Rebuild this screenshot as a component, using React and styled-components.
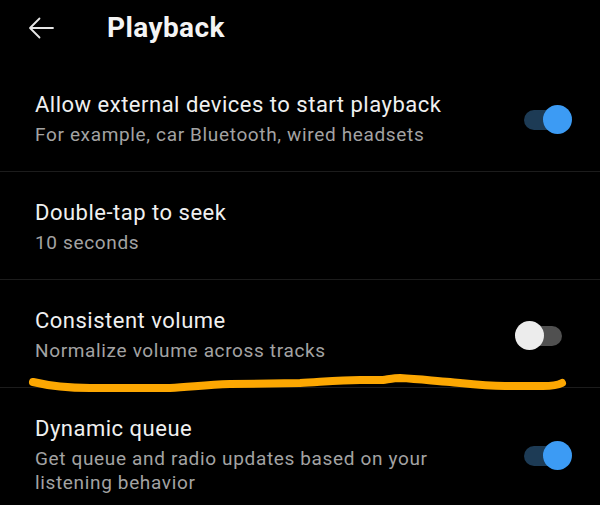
import React from 'react'
import styled, { createGlobalStyle } from 'styled-components'

const GlobalStyle = createGlobalStyle`
  html, body {
    margin: 0;
    padding: 0;
    background: #000;
  }
  body {
    font-family: Roboto, "Noto Sans", sans-serif;
    -webkit-font-smoothing: antialiased;
  }
`

const settings = [
  {
    title: 'Allow external devices to start playback',
    sub: 'For example, car Bluetooth, wired headsets',
    toggle: true,
  },
  { title: 'Double-tap to seek', sub: '10 seconds' },
  {
    title: 'Consistent volume',
    sub: 'Normalize volume across tracks',
    toggle: false,
  },
  {
    title: 'Dynamic queue',
    sub: 'Get queue and radio updates based on your listening behavior',
    toggle: true,
  },
]

const BackArrow = () => (
  <svg width="26" height="22" viewBox="0 0 26 22" fill="none">
    <path
      d="M25 11H2.5M11.5 1.5L2 11l9.5 9.5"
      stroke="#e6e6e6"
      strokeWidth="1.8"
      strokeLinecap="round"
      strokeLinejoin="round"
    />
  </svg>
)

const Scribble = () => (
  <ScribbleSvg width="600" height="30" viewBox="0 365 600 30">
    <path
      d="M33 382 C 50 386, 70 388, 90 388 L 170 388 C 190 387, 205 385, 230 384 L 300 383 C 320 382, 340 380, 360 380 L 383 380 C 390 379, 395 378, 400 378 C 420 379, 435 381, 450 382 C 470 384, 485 386, 505 386 L 543 386 C 553 386, 558 385, 562 383"
      stroke="#fca702"
      strokeWidth="8"
      strokeLinecap="round"
      strokeLinejoin="round"
      fill="none"
    />
  </ScribbleSvg>
)

const App = () => {
  return (
    <Screen>
      <GlobalStyle />
      <Header>
        <BackButton>
          <BackArrow />
        </BackButton>
        <HeaderTitle>Playback</HeaderTitle>
      </Header>
      <List>
        {settings.map((s, i) => (
          <Row key={s.title} $first={i === 0}>
            <TextCol>
              <Title>{s.title}</Title>
              <Sub>{s.sub}</Sub>
            </TextCol>
            {s.toggle !== undefined && <Switch $on={s.toggle} />}
          </Row>
        ))}
        <Scribble />
      </List>
    </Screen>
  )
}

export default App

const Screen = styled.div`
  width: 600px;
  height: 505px;
  overflow: hidden;
  background: #000;
  color: #f1f1f1;
`

const Header = styled.div`
  height: 56px;
  padding: 0 0 8px 28px;
  display: flex;
  align-items: center;
`

const BackButton = styled.div`
  width: 26px;
  display: flex;
  align-items: center;
  margin-right: 53px;
`

const HeaderTitle = styled.h1`
  margin: 0;
  font-size: 28px;
  line-height: 32px;
  font-weight: 700;
  letter-spacing: 0.4px;
  color: #f4f4f4;
`

const List = styled.div`
  position: relative;
`

const ScribbleSvg = styled.svg`
  position: absolute;
  left: 0;
  top: 301px;
  pointer-events: none;
`

const Row = styled.div`
  display: flex;
  align-items: center;
  gap: 40px;
  padding: 27px 28px 24px 35px;
  border-top: ${(p) => (p.$first ? 'none' : '1px solid #1c1c1c')};
`

const TextCol = styled.div`
  flex: 1;
  min-width: 0;
`

const Title = styled.div`
  font-size: 22px;
  line-height: 28px;
  letter-spacing: 0.5px;
  color: #f0f0f0;
`

const Sub = styled.div`
  margin-top: 4px;
  font-size: 19px;
  line-height: 24px;
  letter-spacing: 0.65px;
  color: #a3a3a3;
`

const Switch = styled.div`
  position: relative;
  flex: none;
  width: 57px;
  height: 29px;

  &::before {
    content: '';
    position: absolute;
    left: 9px;
    right: 10px;
    top: 5px;
    height: 20px;
    border-radius: 10px;
    background: ${(p) => (p.$on ? '#1d3b55' : '#505050')};
  }

  &::after {
    content: '';
    position: absolute;
    top: 0;
    left: ${(p) => (p.$on ? '28px' : '0')};
    width: 29px;
    height: 29px;
    border-radius: 50%;
    background: ${(p) => (p.$on ? '#3c9bf4' : '#ececec')};
  }
`
